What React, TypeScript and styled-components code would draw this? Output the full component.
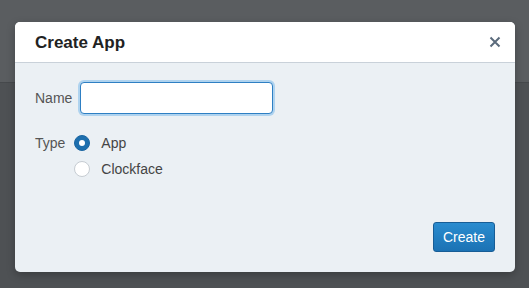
import React from "react";
import styled, { createGlobalStyle } from "styled-components";

const Global = createGlobalStyle`
  html, body { margin: 0; padding: 0; }
  body {
    width: 529px;
    height: 288px;
    overflow: hidden;
    font-family: "Liberation Sans", Arial, Helvetica, sans-serif;
    background: #4e5154;
  }
  * { box-sizing: border-box; }
`;

const Page = styled.div`
  position: relative;
  width: 529px;
  height: 288px;
  background: #4e5154;
`;

const NavBand = styled.div`
  height: 83px;
  background: #5a5d60;
  border-bottom: 1px solid #46494c;
`;

const Modal = styled.div`
  position: absolute;
  left: 15px;
  top: 22px;
  width: 500px;
  height: 250px;
  border-radius: 5px;
  overflow: hidden;
  background: #ebf0f4;
  display: flex;
  flex-direction: column;
  box-shadow: 0 3px 9px rgba(0, 0, 0, 0.25);
`;

const Header = styled.div`
  height: 41px;
  flex: none;
  background: #ffffff;
  border-bottom: 1px solid #c9d1d9;
  display: flex;
  align-items: center;
  justify-content: space-between;
  padding: 0 14px 0 20px;
`;

const Title = styled.h4`
  margin: 0;
  font-size: 17px;
  font-weight: bold;
  color: #222;
  line-height: 1;
  padding-top: 1px;
`;

const Close = styled.button`
  border: 0;
  background: transparent;
  padding: 0;
  width: 12px;
  height: 12px;
  display: flex;
  align-items: center;
  justify-content: center;
  cursor: pointer;
`;

const Body = styled.div`
  flex: 1;
  display: flex;
  flex-direction: column;
  padding: 19px 20px 20px 20px;
`;

const Row = styled.div<{ $align?: string; $mt?: number }>`
  display: flex;
  align-items: ${(p) => p.$align || "center"};
  margin-top: ${(p) => p.$mt || 0}px;
`;

const Label = styled.label`
  font-size: 14px;
  color: #555;
  margin-right: 9px;
  line-height: 16px;
`;

const Input = styled.input`
  width: 193px;
  height: 32px;
  border: 1px solid #2e7fc3;
  border-radius: 4px;
  background: #fff;
  outline: none;
  box-shadow: 0 0 0 2px rgba(102, 175, 233, 0.45);
  font-size: 14px;
  font-family: inherit;
  padding: 0 8px;
  margin-left: -1px;
`;

const RadioList = styled.div`
  display: flex;
  flex-direction: column;
  gap: 10px;
`;

const RadioItem = styled.label`
  display: flex;
  align-items: center;
  font-size: 14px;
  color: #444;
  line-height: 16px;
`;

const RadioDot = styled.span<{ $checked?: boolean }>`
  width: 16px;
  height: 16px;
  border-radius: 50%;
  margin-right: 11px;
  flex: none;
  background: ${(p) => (p.$checked ? "#1d6fae" : "#fff")};
  border: 1px solid ${(p) => (p.$checked ? "#1b66a2" : "#c6ccd2")};
  display: flex;
  align-items: center;
  justify-content: center;
  &::after {
    content: "";
    display: ${(p) => (p.$checked ? "block" : "none")};
    width: 6px;
    height: 6px;
    border-radius: 50%;
    background: #fff;
  }
`;

const Footer = styled.div`
  margin-top: auto;
  display: flex;
  justify-content: flex-end;
`;

const Button = styled.button`
  width: 62px;
  height: 30px;
  border-radius: 3px;
  border: 1px solid #175d96;
  background: linear-gradient(#2a8ccf, #1b72b4);
  color: #fff;
  font-size: 14px;
  font-family: inherit;
  padding: 0;
`;

export default function App() {
  return (
    <>
      <Global />
      <Page>
        <NavBand />
        <Modal>
          <Header>
            <Title>Create App</Title>
            <Close aria-label="Close">
              <svg width="12" height="12" viewBox="0 0 12 12">
                <path d="M1.5 1.5 L10.5 10.5 M10.5 1.5 L1.5 10.5" stroke="#5b6b7c" strokeWidth="2" strokeLinecap="butt" />
              </svg>
            </Close>
          </Header>
          <Body>
            <Row>
              <Label>Name</Label>
              <Input />
            </Row>
            <Row $align="flex-start" $mt={21}>
              <Label>Type</Label>
              <RadioList>
                <RadioItem>
                  <RadioDot $checked />
                  App
                </RadioItem>
                <RadioItem>
                  <RadioDot />
                  Clockface
                </RadioItem>
              </RadioList>
            </Row>
            <Footer>
              <Button>Create</Button>
            </Footer>
          </Body>
        </Modal>
      </Page>
    </>
  );
}
